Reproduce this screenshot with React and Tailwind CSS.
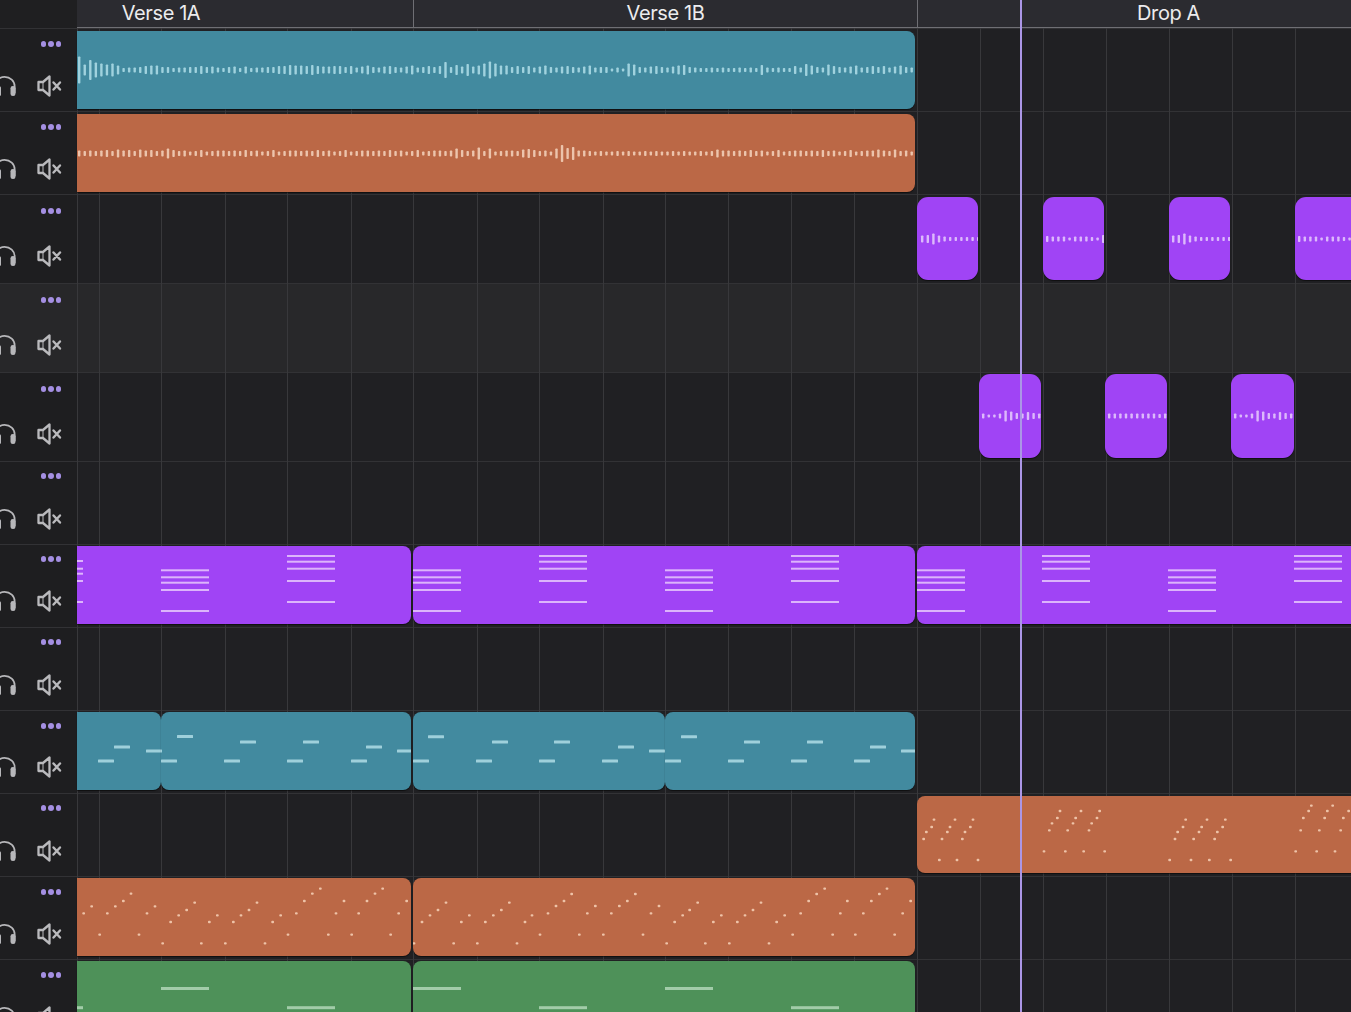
import React from "react";

const gridXs = [77, 99, 161, 225, 287, 351, 413, 477, 539, 603, 665, 728, 791, 854, 917, 980, 1043, 1106, 1169, 1232, 1295];

const pick = (list, i) => list[i % list.length];

function waveBars(x0, count, step, cy, color, heightAt, w = 2.4) {
  const out = [];
  for (let i = 0; i < count; i++) {
    const x = x0 + i * step;
    const h = heightAt(i, x);
    out.push(<rect key={i} x={x} y={cy - h / 2} width={w} height={h} rx={0.8} fill={color} />);
  }
  return out;
}

const tealHead = [27, 11, 20, 15, 13, 11, 13, 9, 4, 5, 5, 6, 8, 9, 9, 6, 6, 4, 5, 5, 6, 6, 8, 6, 7, 5, 4, 6, 7, 4, 7, 4, 5, 5, 6, 6, 8, 8, 10, 9, 9, 8, 10, 8, 7, 7, 8, 8];
const tealLoop = [6, 8, 5, 7, 9, 6, 5, 7, 8, 6, 5, 7, 9, 5, 6, 8];
const tealPeaks = { 66: 16, 67: 6, 68: 10, 69: 7, 70: 12, 72: 9, 73: 13, 74: 17, 75: 13, 77: 9, 99: 13, 100: 11, 109: 10, 123: 10, 131: 12, 135: 11 };
const tealH = (i, x) => {
  if (i < tealHead.length) return tealHead[i];
  if (tealPeaks[i]) return tealPeaks[i];
  if (x > 694 && x < 790) return pick([4, 5, 4, 4, 5], i);
  if (x > 600 && x < 622) return pick([3, 5, 3, 6], i);
  return pick(tealLoop, i);
};
const orangePeaks = { 16: 10, 68: 10, 72: 12, 74: 10, 80: 8, 81: 9, 86: 10, 87: 17, 88: 11, 89: 13, 90: 6, 115: 8, 144: 8, 147: 8 };
const orangeLoop = [6, 5, 6, 5, 7, 5, 6, 4, 5, 7, 4, 5, 6];
const orangeH = (i, x) => {
  if (orangePeaks[i]) return orangePeaks[i];
  if (x > 100 && x < 160) return pick([6, 7, 5, 8], i);
  if (x > 590 && x < 720) return pick([4, 4, 5, 4, 5], i);
  return pick(orangeLoop, i);
};

const waveA = [7, 8, 11, 7, 5, 4, 4, 4, 4, 4, 4];
const waveB = [6, 5, 5, 5, 3, 5, 5, 5, 4, 3, 8];
const waveC = [5, 3, 3, 5, 11, 9, 6, 5, 8, 6, 5];
const waveD = [5, 5, 5, 5, 5, 5, 5, 5, 5, 4, 5];
const LILAC = "#dcb9fb";
const pulse = (x0, list, cy) => waveBars(x0, list.length, 5.6, cy, LILAC, (i) => list[i]);

const chordA = [570.3, 577.3, 582.7, 590, 611];
const chordB = [556, 561.7, 568.7, 581, 602];
const chordStarts = [[161, chordA], [287, chordB], [413, chordA], [539, chordB], [665, chordA], [791, chordB], [917, chordA], [1042, chordB], [1168, chordA], [1294, chordB]];
const CHORD = "#dcb4fb";
const chords = (
  <>
    {[561, 568.7, 573.7, 581, 602].map((y) => (
      <rect key={y} x={77} y={y - 1} width={6} height={2} fill={CHORD} />
    ))}
    {chordStarts.flatMap(([x, ys]) =>
      ys.map((y) => <rect key={x + "-" + y} x={x} y={y - 1} width={48} height={2} fill={CHORD} />)
    )}
  </>
);

const tealNotes = [
  [98, 761], [114, 747], [146, 751], [161, 761], [177, 736.5], [224, 761], [240, 742], [287, 761], [303, 742], [351, 761], [366, 747], [397, 751],
  [413, 761], [428, 736.7], [476, 761], [492, 742], [539, 761], [554, 742], [602, 761], [618, 747], [649, 751], [665, 761], [681, 736.7], [728, 761], [744, 742], [791, 761], [807, 742], [854, 761], [870, 747], [901, 751],
];
const tealMidi = tealNotes.map(([x, y]) => <rect key={x} x={x} y={y - 1.5} width={16} height={3} rx={0.5} fill="#9fd0db" />);

const greenNotes = [[77, 1007.7, 6], [161, 988.5, 48], [287, 1007.7, 48], [413, 988.5, 48], [539, 1007.7, 48], [665, 988.5, 48], [791, 1007.7, 48]];
const greenMidi = greenNotes.map(([x, y, w]) => <rect key={x} x={x} y={y - 1.5} width={w} height={3} fill="#a2cca9" />);

const dropDots = [
  [71,177],[79,156],[95,141],[102,119],[118,240],[126,177],[142,156],[150,141],[165,119],[171,240],[187,177],[195,156],[211,141],[219,119],[234,240],
  [432,214],[448,151],[456,130],[472,114],[480,93],[496,214],[503,151],[519,130],[527,114],[543,93],[551,214],[567,151],[575,130],[591,114],[599,93],[614,214],
  [809,240],[825,177],[833,156],[849,141],[857,119],[873,240],[881,177],[897,156],[905,141],[921,119],[928,240],[944,177],[952,156],[968,141],[976,119],[992,240],
  [1187,214],[1202,151],[1210,114],[1226,93],[1234,77],[1250,214],[1258,151],[1274,114],[1282,93],[1298,77],[1305,214],[1322,151],[1330,114],[1346,93],
].map(([x, y]) => [x / 3 + 900, y / 3 + 780]);

const arpA = [
  [251,160],[275,139],[299,224],[322,160],[346,139],[370,123],[393,101],[417,224],[441,160],[465,139],[488,250],[512,186],[536,166],[560,150],[584,128],[604,250],[628,186],[652,166],[676,250],[700,186],[723,166],[747,150],[771,128],[795,250],[818,186],[842,166],[864,224],[889,160],[913,123],[937,101],[961,86],[985,224],[1008,160],[1032,123],[1055,224],[1076,160],[1101,123],[1125,101],[1148,86],[1172,224],[1196,160],[1220,123],
].map(([x, y]) => [x / 3, y / 3 + 860]);
const arpB = [
  [12,220],[36,156],[60,136],[84,120],[108,98],[131,220],[154,156],[178,136],[202,220],[226,156],[250,136],[274,120],[298,98],[321,220],[345,156],[366,136],[390,194],[414,130],[438,108],[462,93],[485,72],[508,194],[532,130],[556,108],[580,194],[604,130],[628,108],[652,93],[676,72],[699,194],[723,130],[747,108],[770,220],[794,156],[818,136],[839,120],[863,98],[886,220],[910,156],[934,136],[958,220],[982,156],[1005,136],[1029,120],[1053,98],[1077,220],[1100,156],[1124,136],[1148,194],[1172,130],[1196,93],[1220,72],[1244,56],[1268,194],[1291,130],[1312,93],[1336,194],[1360,130],[1384,93],[1408,72],[1431,56],[1454,194],[1478,130],[1502,93],
].map(([x, y]) => [x / 3 + 410, y / 3 + 870]);

const dots = (list) =>
  list.map(([x, y], i) => <rect key={i} x={x - 1.4} y={y - 1.2} width={2.8} height={2.4} rx={1} fill="#eec3a8" />);

const TEAL = "bg-[#428a9f]";
const ORANGE = "bg-[#bb6846]";
const PURPLE = "bg-[#a044f5]";
const GREEN = "bg-[#4e9159]";

const rows = [
  {
    cls: "h-[83px]", track: "pt-[2px]", y: 31, panel: "pt-[12px] pb-[14px]",
    clips: [{ cls: `w-[838px] h-[78px] rounded-r-[8px] ${TEAL}`, x: 77, w: 838, h: 78, art: waveBars(78, 151, 5.55, 70, "#a0d2de", tealH) }],
  },
  {
    cls: "h-[83px]", track: "pt-[2px]", y: 114, panel: "pt-[12px] pb-[14px]",
    clips: [{ cls: `w-[838px] h-[78px] rounded-r-[8px] ${ORANGE}`, x: 77, w: 838, h: 78, art: waveBars(78, 151, 5.55, 153.5, "#ecc4ac", orangeH) }],
  },
  {
    cls: "h-[89px]", track: "pt-[2px]", y: 197, panel: "pt-[13px] pb-[16px]",
    clips: [
      { cls: `ml-[840px] w-[61px] h-[83px] rounded-[11px] ${PURPLE}`, x: 917, w: 61, h: 83, art: pulse(921, waveA, 239) },
      { cls: `ml-[65px] w-[61px] h-[83px] rounded-[11px] ${PURPLE}`, x: 1043, w: 61, h: 83, art: pulse(1046, waveB, 239) },
      { cls: `ml-[65px] w-[61px] h-[83px] rounded-[11px] ${PURPLE}`, x: 1169, w: 61, h: 83, art: pulse(1172, waveA, 239) },
      { cls: `ml-[65px] w-[80px] h-[83px] rounded-[11px] ${PURPLE}`, x: 1295, w: 80, h: 83, art: pulse(1298, waveB, 239) },
    ],
  },
  { cls: "h-[89px] bg-[#28282a]", track: "", panel: "pt-[13px] pb-[16px] bg-[#272729]", clips: [] },
  {
    cls: "h-[89px]", track: "pt-[1px]", y: 374, panel: "pt-[13px] pb-[16px]",
    clips: [
      { cls: `ml-[902px] w-[62px] h-[84px] rounded-[11px] ${PURPLE}`, x: 979, w: 62, h: 84, art: pulse(982, waveC, 416) },
      { cls: `ml-[64px] w-[62px] h-[84px] rounded-[11px] ${PURPLE}`, x: 1105, w: 62, h: 84, art: pulse(1108, waveD, 416) },
      { cls: `ml-[64px] w-[63px] h-[84px] rounded-[11px] ${PURPLE}`, x: 1231, w: 63, h: 84, art: pulse(1234, waveC, 416) },
    ],
  },
  { cls: "h-[83px]", track: "", panel: "pt-[11px] pb-[14px]", clips: [] },
  {
    cls: "h-[83px]", track: "pt-[1px]", y: 546, panel: "pt-[11px] pb-[15px]",
    clips: [
      { cls: `w-[334px] h-[78px] rounded-r-[8px] ${PURPLE}`, x: 77, w: 334, h: 78, art: chords },
      { cls: `ml-[2px] w-[502px] h-[78px] rounded-[8px] ${PURPLE}`, x: 413, w: 502, h: 78, art: chords },
      { cls: `ml-[2px] w-[500px] h-[78px] rounded-[8px] ${PURPLE}`, x: 917, w: 500, h: 78, art: chords },
    ],
  },
  { cls: "h-[83px]", track: "", panel: "pt-[11px] pb-[14px]", clips: [] },
  {
    cls: "h-[83px]", track: "pt-[1px]", y: 712, panel: "pt-[12px] pb-[15px]",
    clips: [
      { cls: `w-[84px] h-[78px] rounded-r-[8px] ${TEAL}`, x: 77, w: 84, h: 78, art: tealMidi },
      { cls: `w-[250px] h-[78px] rounded-[8px] ${TEAL}`, x: 161, w: 250, h: 78, art: tealMidi },
      { cls: `ml-[2px] w-[252px] h-[78px] rounded-[8px] ${TEAL}`, x: 413, w: 252, h: 78, art: tealMidi },
      { cls: `w-[250px] h-[78px] rounded-[8px] ${TEAL}`, x: 665, w: 250, h: 78, art: tealMidi },
    ],
  },
  {
    cls: "h-[83px]", track: "pt-[2px]", y: 796, panel: "pt-[11px] pb-[14px]",
    clips: [{ cls: `ml-[840px] w-[500px] h-[77px] rounded-[8px] ${ORANGE}`, x: 917, w: 500, h: 77, art: dots(dropDots) }],
  },
  {
    cls: "h-[83px]", track: "pt-[1px]", y: 878, panel: "pt-[12px] pb-[14px]",
    clips: [
      { cls: `w-[334px] h-[78px] rounded-r-[8px] ${ORANGE}`, x: 77, w: 334, h: 78, art: dots(arpA) },
      { cls: `ml-[2px] w-[502px] h-[78px] rounded-[8px] ${ORANGE}`, x: 413, w: 502, h: 78, art: dots(arpB) },
    ],
  },
  {
    cls: "h-[83px]", track: "pt-[1px]", y: 961, panel: "pt-[12px] pb-[14px]",
    clips: [
      { cls: `w-[334px] h-[78px] rounded-r-[8px] ${GREEN}`, x: 77, w: 334, h: 78, art: greenMidi },
      { cls: `ml-[2px] w-[502px] h-[78px] rounded-[8px] ${GREEN}`, x: 413, w: 502, h: 78, art: greenMidi },
    ],
  },
];

function Headphones() {
  return (
    <svg width="17" height="22" viewBox="0 0 17 22" className="block flex-none" fill="none">
      <path d="M-5.5 14 V11.5 A10 9.5 0 0 1 14.7 11.5 V18" stroke="#b7b7ba" strokeWidth="1.7" />
      <rect x="10.5" y="11" width="5" height="10" rx="2.3" fill="#b7b7ba" />
      <rect x="-2" y="11.5" width="3" height="9.5" rx="1.2" fill="#b7b7ba" />
    </svg>
  );
}

function Mute() {
  return (
    <svg width="25" height="22" viewBox="0 0 25 22" className="block flex-none" fill="none" stroke="#bababd" strokeWidth="2.3" strokeLinejoin="round" strokeLinecap="round">
      <path d="M1.5 7 H6 L12.5 1.5 V20.5 L6 15 H1.5 Z" />
      <path d="M6 7 V15" strokeWidth="1" />
      <path d="M16.5 7.5 L23 14.5 M23 7.5 L16.5 14.5" strokeWidth="2.4" />
    </svg>
  );
}

function TrackPanel({ cls }) {
  return (
    <div className={`w-[77px] flex-none self-stretch flex flex-col justify-between bg-[#1e1e20] ${cls}`}>
      <div className="flex gap-[2.2px] pl-[40.5px]">
        <span className="w-[5.5px] h-[5.5px] rounded-full bg-[#a48fe2]" />
        <span className="w-[5.5px] h-[5.5px] rounded-full bg-[#a48fe2]" />
        <span className="w-[5.5px] h-[5.5px] rounded-full bg-[#a48fe2]" />
      </div>
      <div className="flex items-center gap-[20px]">
        <Headphones />
        <Mute />
      </div>
    </div>
  );
}

function Clip({ clip, y }) {
  return (
    <div className={`relative z-[2] flex-none overflow-hidden shadow-[0_1px_1px_rgba(0,0,0,0.55)] ${clip.cls}`}>
      <svg viewBox={`${clip.x} ${y} ${clip.w} ${clip.h}`} className="block w-full h-full">
        {clip.art}
      </svg>
    </div>
  );
}

function Section({ cls, label }) {
  return (
    <div className={`flex-none h-full flex items-center justify-center border-b border-b-[#6f6f74] bg-[#2b2b30] text-[20px] leading-none text-[#ececee] pb-[2px] tracking-[-0.4px] ${cls}`}>
      {label}
    </div>
  );
}

export default function App() {
  return (
    <div className="relative w-[1351px] h-[1012px] overflow-hidden bg-[#202023] font-['Inter',sans-serif]">
      <div className="flex h-[28px]">
        <div className="w-[77px] flex-none bg-[#1f1f21]" />
        <Section cls="w-[336px] pr-[168px]" label="Verse 1A" />
        <Section cls="w-[504px] border-l border-l-[#6f6f74]" label="Verse 1B" />
        <Section cls="w-[502px] border-l border-l-[#6f6f74]" label="Drop A" />
      </div>
      <div className="relative">
        {rows.map((row, i) => (
          <div key={i} className={`flex border-t border-t-[#323235] ${row.cls}`}>
            <TrackPanel cls={row.panel} />
            <div className={`flex-1 flex items-start ${row.track}`}>
              {row.clips.map((clip) => (
                <Clip key={clip.x} clip={clip} y={row.y} />
              ))}
            </div>
          </div>
        ))}
        <div className="absolute inset-0 z-[1] pointer-events-none">
          {gridXs.map((x) => (
            <span key={x} className="absolute top-0 bottom-0 w-px bg-[#38383b]" style={{ left: x }} />
          ))}
        </div>
      </div>
      <div className="absolute left-[1020px] top-0 bottom-0 z-[3] w-[2px] bg-[#ab96e6]" />
    </div>
  );
}
